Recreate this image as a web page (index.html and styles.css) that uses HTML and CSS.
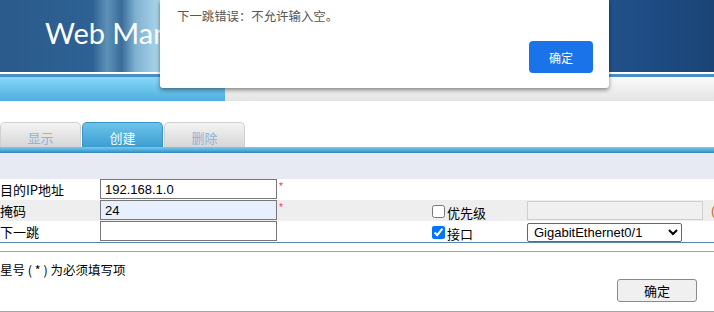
FILE: index.html
```html
<!DOCTYPE html>
<html lang="zh-CN">
<head>
    <meta charset="UTF-8">
    <title>Web Manager</title>
    <link rel="stylesheet" href="styles.css">
</head>
<body>
    <!-- Header -->
    <div class="header">
        <span class="logo">Web Manager</span>
    </div>
    <div class="stripe"></div>
    <div class="nav">
        <div class="nav-left"></div>
        <div class="nav-right"></div>
    </div>

    <!-- Tabs -->
    <div class="tabs">
        <div class="tab">显示</div>
        <div class="tab active">创建</div>
        <div class="tab">删除</div>
    </div>
    <div class="tab-line"></div>
    <div class="band"></div>

    <!-- Form -->
    <div class="form">
        <div class="row">
            <div class="label">目的IP地址</div>
            <div class="field"><input type="text" class="text" value="192.168.1.0"><span class="star">*</span></div>
            <div class="check"></div>
            <div class="field"></div>
        </div>
        <div class="row grey">
            <div class="label">掩码</div>
            <div class="field"><input type="text" class="text filled" value="24"><span class="star">*</span></div>
            <div class="check"><input type="checkbox"><span>优先级</span></div>
            <div class="field"><input type="text" class="text off" disabled><span class="hint">(0-255)</span></div>
        </div>
        <div class="row">
            <div class="label">下一跳</div>
            <div class="field"><input type="text" class="text"></div>
            <div class="check"><input type="checkbox" checked><span>接口</span></div>
            <div class="field">
                <select class="iface">
                    <option>GigabitEthernet0/1</option>
                </select>
            </div>
        </div>
    </div>

    <div class="footer">
        <div class="note">星号 ( * ) 为必须填写项</div>
        <div class="actions"><button class="btn">确定</button></div>
    </div>

    <!-- Alert dialog -->
    <div class="dialog">
        <div class="dialog-msg">下一跳错误：不允许输入空。</div>
        <button class="dialog-btn">确定</button>
    </div>
</body>
</html>
```

FILE: styles.css
```css
body {
    margin: 0;
    width: 714px;
    height: 312px;
    overflow: hidden;
    position: relative;
    background-color: #fff;
    font-family: 'Liberation Sans', 'Noto Sans CJK SC', sans-serif;
    font-size: 13px;
    color: #000;
}

/* Header */
.header {
    height: 72px;
    background: linear-gradient(to right, #2b5a8c 0%, #2e6294 13%, #5f92b8 15%, #3a6c9a 17%, #7fb2d2 19%, #a8d2e8 22%, #4f86b2 30%, #2d5e92 70%, #21508a 86%, #1a4476 100%);
    padding-left: 45px;
    box-sizing: border-box;
}

.logo {
    display: inline-block;
    font-family: 'Lato', sans-serif;
    font-size: 29px;
    color: #fff;
    line-height: 32px;
    margin-top: 17px;
}

.stripe {
    height: 3px;
    margin-top: 2px;
    background-color: #4a8ec2;
}

.nav {
    display: flex;
    height: 24px;
}

.nav-left {
    width: 225px;
    background: linear-gradient(#86d8fa, #4eaedc);
}

.nav-right {
    flex: 1;
    background: linear-gradient(#fafafa, #e4e4e4);
}

/* Tabs */
.tabs {
    display: flex;
    gap: 1px;
    margin-top: 21px;
    height: 25px;
}

.tab {
    width: 81px;
    box-sizing: border-box;
    border: 1px solid #d0d0d0;
    border-bottom: none;
    border-radius: 5px 5px 0 0;
    background: linear-gradient(#f4f4f4, #d6d6d6);
    color: #8cb4dc;
    text-align: center;
    line-height: 30px;
    font-family: 'Noto Sans CJK SC', sans-serif;
    font-size: 13px;
}

.tab.active {
    border-color: #3a92c4;
    background: linear-gradient(#6cc4ea, #3c9ed2);
    color: #fff;
}

.tab-line {
    height: 6px;
    background: linear-gradient(#7ccaee, #4aa8d8 60%, #3a86b6);
}

.band {
    height: 26px;
    background-color: #e8eaf3;
}

/* Form */
.form {
    width: 760px;
    border-bottom: 1px solid #5a86ac;
}

.row {
    display: flex;
    height: 21px;
}

.row.grey {
    background-color: #eeeeee;
}

.label {
    width: 100px;
    line-height: 21px;
    font-family: 'Noto Sans CJK SC', sans-serif;
}

.field {
    width: 330px;
    display: flex;
    align-items: flex-start;
}

.row .field:last-child {
    width: auto;
    flex: 1;
    padding-top: 1px;
}

.text {
    width: 177px;
    height: 20px;
    box-sizing: border-box;
    margin: 0;
    padding: 0 4px;
    border: 1px solid #777;
    font-family: 'Liberation Sans', sans-serif;
    font-size: 13px;
    background-color: #fff;
}

.text.filled {
    background-color: #e8f0fe;
}

.text.off {
    width: 176px;
    height: 19px;
    background-color: #f0f0f0;
    border-color: #cfcfcf;
}

.star {
    color: #f0306a;
    font-size: 10px;
    margin-left: 2px;
    line-height: 12px;
    padding-top: 2px;
}

.hint {
    color: #c8641a;
    margin-left: 8px;
    line-height: 19px;
}

.check {
    width: 97px;
    display: flex;
    align-items: center;
    padding-left: 2px;
    box-sizing: border-box;
    font-family: 'Noto Sans CJK SC', sans-serif;
}

.check input {
    margin: 1px 2px 0 0;
    width: 13px;
    height: 13px;
}

.check span {
    line-height: 21px;
    margin-top: 3px;
}

.iface {
    width: 155px;
    height: 19px;
    margin-top: 1px;
    font-family: 'Liberation Sans', sans-serif;
    font-size: 13px;
    color: #000;
    border: 1px solid #666;
    border-radius: 2px;
    background-color: #fff;
    padding: 0 2px;
}

/* Footer */
.footer {
    margin-top: 8px;
    border-top: 1px solid #a4a4a4;
    border-bottom: 1px solid #a4a4a4;
    padding: 9px 0 9px;
}

.note {
    line-height: 18px;
    font-family: 'Noto Sans CJK SC', sans-serif;
    font-size: 12.5px;
}

.actions {
    display: flex;
    justify-content: flex-end;
    padding-right: 17px;
}

.btn {
    width: 80px;
    height: 23px;
    margin: 0;
    border: 1px solid #8a8a8a;
    border-radius: 3px;
    background-color: #f0f0f0;
    font-family: 'Noto Sans CJK SC', sans-serif;
    font-size: 13px;
    color: #000;
    padding: 0;
}

/* Alert dialog */
.dialog {
    position: absolute;
    top: 0;
    left: 160px;
    width: 449px;
    height: 88px;
    background-color: #fff;
    border-radius: 0 0 3px 3px;
    box-shadow: 0 2px 4px rgba(0, 0, 0, 0.45);
}

.dialog-msg {
    position: absolute;
    top: 6px;
    left: 17px;
    font-family: 'Noto Sans CJK SC', sans-serif;
    font-size: 12.4px;
    line-height: 20px;
    color: #555;
}

.dialog-btn {
    position: absolute;
    top: 41px;
    left: 369px;
    width: 64px;
    height: 32px;
    border: none;
    border-radius: 4px;
    background-color: #1a73e8;
    color: #fff;
    font-family: 'Noto Sans CJK SC', sans-serif;
    font-size: 12px;
    padding: 0;
}
```
